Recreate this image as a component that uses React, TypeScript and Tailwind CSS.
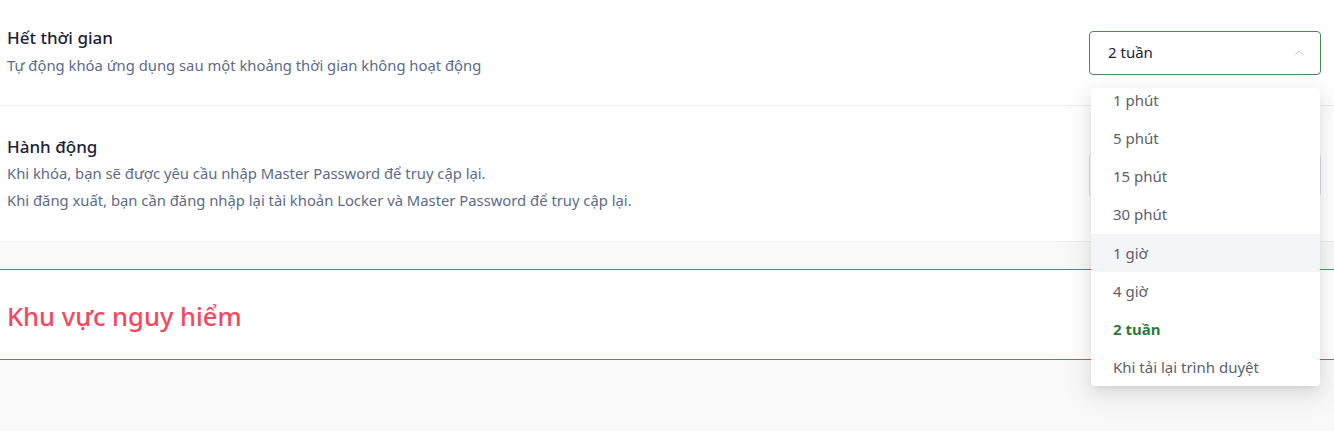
import { ChevronUp, ChevronDown } from 'lucide-react';

const options = ['1 phút', '5 phút', '15 phút', '30 phút', '1 giờ', '4 giờ', '2 tuần', 'Khi tải lại trình duyệt'];

export default function App() {
  return (
    <div
      className="relative w-full h-[431px] bg-[#f9f9f9] overflow-hidden"
      style={{ fontFamily: '"Noto Sans", "Open Sans", sans-serif' }}
    >
      {/* Settings card */}
      <div className="bg-white border-b border-[#eceef2]">
        {/* Timeout */}
        <div className="flex items-center justify-between pl-[7px] pr-[13px] pt-[26px] pb-[26px] border-b border-[#eceef2]">
          <div>
            <h4 className="text-[17px] leading-6 font-medium text-[#1c2237]">Hết thời gian</h4>
            <p className="mt-[2px] text-[14.8px] leading-[27px] text-[#5d6b89]">
              Tự động khóa ứng dụng sau một khoảng thời gian không hoạt động
            </p>
          </div>
          <div className="flex items-center justify-between w-[232px] h-[44px] pl-[18px] pr-[13px] border border-[#4f8a54] rounded-[4px] text-[15px] text-[#1c2237]">
            <span>2 tuần</span>
            <ChevronUp className="h-4 w-4 text-[#c3c7cf]" strokeWidth={1.5} />
          </div>
        </div>

        {/* Action */}
        <div className="flex items-center justify-between pl-[7px] pr-[13px] pt-[29px] pb-[27px]">
          <div>
            <h4 className="text-[17px] leading-6 font-medium text-[#1c2237]">Hành động</h4>
            <div className="mt-[1px] text-[14.8px] leading-[27px] text-[#5d6b89]">
              <p>Khi khóa, bạn sẽ được yêu cầu nhập Master Password để truy cập lại.</p>
              <p>Khi đăng xuất, bạn cần đăng nhập lại tài khoản Locker và Master Password để truy cập lại.</p>
            </div>
          </div>
          {/* second select, hidden under the open menu */}
          <div className="flex items-center justify-end w-[232px] h-[44px] pl-[18px] pr-[13px] border border-[#d9dce2] rounded-[4px]">
            <ChevronDown className="h-4 w-4 text-[#c3c7cf]" strokeWidth={1.5} />
          </div>
        </div>
      </div>

      {/* Danger zone */}
      <div className="mt-[27px] bg-white">
        <div className="h-px bg-[#e84a4a]" />
        <div className="h-[89px] flex items-center pl-[7px] pt-[4px]">
          <h3 className="text-[25.5px] font-medium text-[#f5485e]">Khu vực nguy hiểm</h3>
        </div>
        <div className="h-px bg-[#e84a4a]" />
      </div>

      {/* Dropdown menu */}
      <div className="absolute top-[88px] right-[14px] w-[229px] h-[298px] overflow-hidden bg-white rounded-[4px] shadow-[0_3px_6px_-4px_rgba(0,0,0,0.12),0_6px_16px_0_rgba(0,0,0,0.08),0_9px_28px_8px_rgba(0,0,0,0.05)]">
        <ul className="-mt-[7px]">
          {options.map((o) => (
            <li
              key={o}
              className={
                o === '2 tuần'
                  ? 'h-[38.2px] flex items-center px-[22px] text-[15px] font-bold text-[#2b7c3c]'
                  : o === '1 giờ'
                  ? 'h-[38.2px] flex items-center px-[22px] text-[15px] text-[#5c5f6a] bg-[#f3f5f8]'
                  : 'h-[38.2px] flex items-center px-[22px] text-[15px] text-[#5c5f6a]'
              }
            >
              {o}
            </li>
          ))}
        </ul>
      </div>
    </div>
  );
}
